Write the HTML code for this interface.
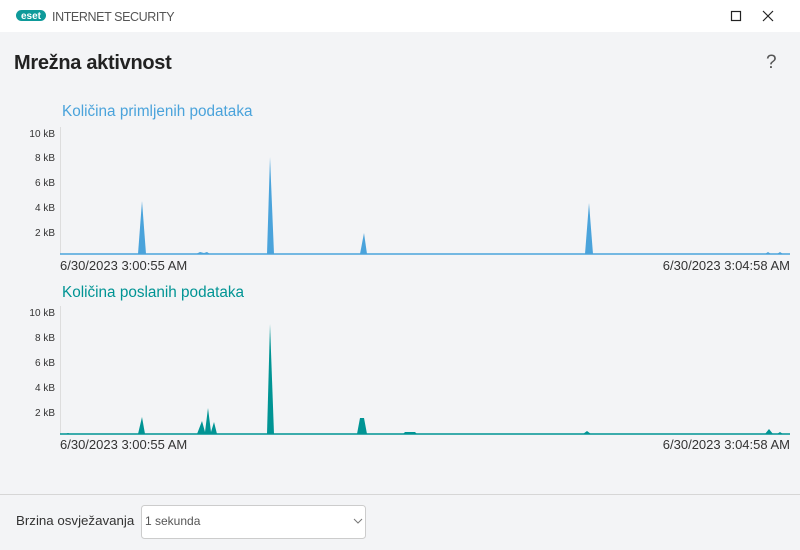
<!DOCTYPE html>
<html><head><meta charset="utf-8"><style>
*{margin:0;padding:0;box-sizing:border-box}
body{width:800px;height:550px;overflow:hidden;background:#f3f4f6;font-family:"Liberation Sans",sans-serif;position:relative}
.tb{position:absolute;left:0;top:0;width:800px;height:32px;background:#fff}
.t{position:absolute;white-space:nowrap}
</style></head><body>
<div class="tb"></div>
<svg width="800" height="550" style="position:absolute;left:0;top:0">
<rect x="16" y="10" width="30" height="11" rx="5.5" fill="#0e9a9a"/>
<text x="31" y="19" font-size="10" font-weight="bold" fill="#fff" text-anchor="middle" font-family="Liberation Sans">eset</text>
<text x="52" y="21" font-size="12.5" fill="#555" font-family="Liberation Sans" letter-spacing="-0.4">INTERNET SECURITY</text>
<rect x="731.5" y="11.5" width="9" height="9" fill="none" stroke="#222" stroke-width="1.2"/>
<path d="M763 11L773 21M773 11L763 21" stroke="#222" stroke-width="1.2"/>
<line x1="60.5" y1="127" x2="60.5" y2="254" stroke="#ddd"/>
<line x1="60" y1="254" x2="790" y2="254" stroke="#4aa3db" stroke-width="1.5"/>
<g fill="#4aa3db">
<path d="M138 254L142 201L146 254Z"/>
<path d="M196 254L200 252L204 253L207 252L210 254Z"/>
<path d="M267 254L270 157L274 254Z"/>
<path d="M360 254L364 233L367 254Z"/>
<path d="M585 254L589 203L593 254Z"/>
<path d="M765 254L768 252L771 254L777 254L780 252L783 254Z"/>
</g>
<line x1="60.5" y1="306" x2="60.5" y2="434" stroke="#ddd"/>
<line x1="60" y1="434" x2="790" y2="434" stroke="#009494" stroke-width="1.5"/>
<g fill="#009494">
<path d="M65 434L68 433L71 434Z"/>
<path d="M138 434L142 417L145 434Z"/>
<path d="M197 434L202 421L205 432L208 408L211 432L214 422L217 434Z"/>
<path d="M267 434L270 324L274 434Z"/>
<path d="M357 434L360 418L364 418L367 434Z"/>
<path d="M403 434L405 432L415 432L417 434Z"/>
<path d="M583 434L587 431L591 434Z"/>
<path d="M765 434L769 429L773 434L777 434L780 432L783 434Z"/>
</g>
<g font-size="10" fill="#333" text-anchor="end" font-family="Liberation Sans">
<text x="55" y="137">10 kB</text><text x="55" y="161">8 kB</text><text x="55" y="186">6 kB</text><text x="55" y="211">4 kB</text><text x="55" y="236">2 kB</text>
<text x="55" y="316">10 kB</text><text x="55" y="341">8 kB</text><text x="55" y="366">6 kB</text><text x="55" y="391">4 kB</text><text x="55" y="416">2 kB</text>
</g>
<g font-size="13" fill="#333" font-family="Liberation Sans">
<text x="60" y="270">6/30/2023 3:00:55 AM</text><text x="790" y="270" text-anchor="end">6/30/2023 3:04:58 AM</text>
<text x="60" y="449">6/30/2023 3:00:55 AM</text><text x="790" y="449" text-anchor="end">6/30/2023 3:04:58 AM</text>
</g>
<line x1="0" y1="494.5" x2="800" y2="494.5" stroke="#d6d6d6"/>
<rect x="141.5" y="505.5" width="224" height="33" rx="3" fill="#fff" stroke="#ccc"/>
<path d="M354 519L358 523L362 519" fill="none" stroke="#777" stroke-width="1"/>
</svg>
<div class="t" style="left:14px;top:52px;font-size:20px;color:#222;font-weight:bold;letter-spacing:-0.3px">Mrežna aktivnost</div>
<div class="t" style="left:766px;top:52px;font-size:19px;color:#555;">?</div>
<div class="t" style="left:62px;top:103px;font-size:15.3px;color:#4aa3db;">Količina primljenih podataka</div>
<div class="t" style="left:62px;top:284px;font-size:15.3px;color:#009494;">Količina poslanih podataka</div>
<div class="t" style="left:16px;top:513px;font-size:13.3px;color:#333;">Brzina osvježavanja</div>
<div class="t" style="left:145px;top:514px;font-size:12px;color:#555;">1 sekunda</div>
</body></html>
